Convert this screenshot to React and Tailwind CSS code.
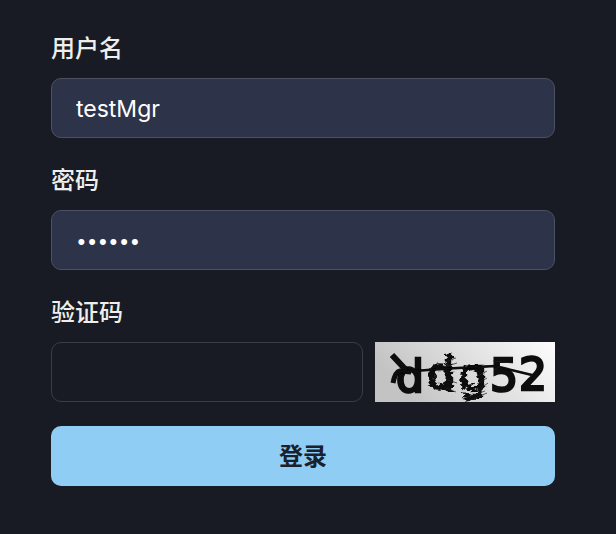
import { useState } from "react";

const labelClass = "block h-9 text-2xl leading-[38px] font-medium text-[#eeeeec]";
const inputClass =
  "block h-[60px] w-full min-w-0 rounded-[10px] border px-6 text-white outline-none";

function Captcha() {
  return (
    <svg
      role="img"
      aria-label="验证码图片"
      viewBox="0 0 180 60"
      className="h-[60px] w-[180px] shrink-0"
    >
      <defs>
        <linearGradient id="paper" x1="0" y1="0.3" x2="1" y2="0">
          <stop offset="0" stopColor="#c3c3c3" />
          <stop offset="0.5" stopColor="#e0e0e0" />
          <stop offset="1" stopColor="#fdfdfd" />
        </linearGradient>
        <filter id="ripple" x="-20%" y="-20%" width="140%" height="140%">
          <feTurbulence type="fractalNoise" baseFrequency="0.2 0.35" numOctaves="1" seed="4" result="noise" />
          <feDisplacementMap in="SourceGraphic" in2="noise" scale="9" xChannelSelector="R" yChannelSelector="G" />
          <feGaussianBlur stdDeviation="0.7" />
        </filter>
        <filter id="soft" x="-20%" y="-20%" width="140%" height="140%">
          <feGaussianBlur stdDeviation="0.7" />
        </filter>
      </defs>
      <rect width="180" height="60" fill="url(#paper)" />
      <g
        fontFamily="DejaVu Sans, Verdana, sans-serif"
        fontSize="44"
        fill="#080808"
        stroke="#080808"
        strokeWidth="2.5"
      >
        <text x="21" y="50" filter="url(#soft)">d</text>
        <text x="52" y="47" filter="url(#ripple)">d</text>
        <text x="84" y="48" filter="url(#ripple)">g</text>
        <text x="115" y="49" filter="url(#soft)">5</text>
        <text x="144" y="48" filter="url(#soft)">2</text>
      </g>
      <g fill="none" stroke="#080808" filter="url(#soft)">
        <path d="M17 13 L31 28" strokeWidth="6" />
        <path d="M18 41 Q20 30 25 29 L36 30" strokeWidth="5" />
        <path d="M24 30 Q75 26 120 24 L157 33" strokeWidth="2.5" />
      </g>
      <g fill="none" stroke="#222" strokeWidth="1" opacity="0.7" filter="url(#soft)">
        <path d="M70 20l11-4M70 25l12-4M71 46l10 4M73 38l9 3M88 57l22-8M90 60l22-9M102 42l10-6M101 35l11-6M103 48l10-7M118 19l20 2M119 28l6-4" />
      </g>
    </svg>
  );
}

export default function App() {
  const [username, setUsername] = useState("testMgr");
  const [password, setPassword] = useState("123456");
  const [code, setCode] = useState("");

  return (
    <main className="min-h-screen bg-[#181b23] pt-[30px] pr-[61px] pb-12 pl-[51px] font-[Inter,'Noto_Sans_CJK_SC',sans-serif]">
      <form className="flex flex-col gap-6" onSubmit={(e) => e.preventDefault()}>
        <div className="flex flex-col gap-3">
          <label htmlFor="username" className={labelClass}>用户名</label>
          <input
            id="username"
            type="text"
            value={username}
            onChange={(e) => setUsername(e.target.value)}
            className={`${inputClass} border-[#4b5163] bg-[#2d3449] pt-0.5 text-[23px]`}
          />
        </div>
        <div className="flex flex-col gap-3">
          <label htmlFor="password" className={labelClass}>密码</label>
          <input
            id="password"
            type="password"
            value={password}
            onChange={(e) => setPassword(e.target.value)}
            className={`${inputClass} border-[#4b5163] bg-[#2d3449] pt-0.5 text-[19px]`}
          />
        </div>
        <div className="flex flex-col gap-3">
          <label htmlFor="captcha" className={labelClass}>验证码</label>
          <div className="flex gap-3">
            <input
              id="captcha"
              type="text"
              value={code}
              onChange={(e) => setCode(e.target.value)}
              className={`${inputClass} flex-1 border-[#3a3d45] bg-transparent pt-0.5 text-[23px]`}
            />
            <Captcha />
          </div>
        </div>
        <button
          type="submit"
          className="h-[60px] w-full rounded-[10px] bg-[#90cdf4] pt-0.5 text-2xl font-semibold text-[#1a202c]"
        >
          登录
        </button>
      </form>
    </main>
  );
}
